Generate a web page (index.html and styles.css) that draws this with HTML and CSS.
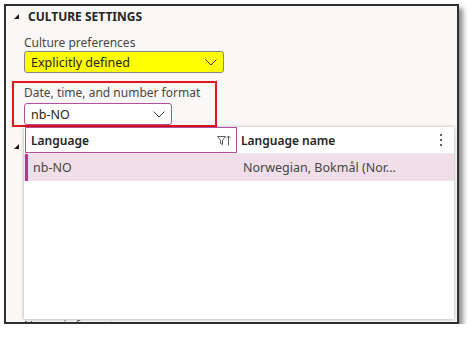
FILE: index.html
```html
<!DOCTYPE html>
<html lang="en">
<head>
  <meta charset="UTF-8" />
  <title>Culture settings</title>
  <link rel="stylesheet" href="styles.css">
</head>
<body>
  <div class="frame">
    <div class="section-head">
      <svg class="caret" width="5" height="5" viewBox="0 0 5 5"><polygon points="0,5 5,5 5,0" /></svg>
      <span>CULTURE SETTINGS</span>
    </div>

    <div class="field">
      <div class="label">Culture preferences</div>
      <div class="select select-yellow">
        <span>Explicitly defined</span>
        <svg class="chevron" width="12" height="7" viewBox="0 0 12 7"><polyline points="0.5,0.5 6,6 11.5,0.5" /></svg>
      </div>
    </div>

    <div class="highlight">
      <div class="label">Date, time, and number format</div>
      <div class="select select-focus">
        <span>nb-NO</span>
        <svg class="chevron" width="12" height="7" viewBox="0 0 12 7"><polyline points="0.5,0.5 6,6 11.5,0.5" /></svg>
      </div>
    </div>

    <div class="section-head second">
      <svg class="caret" width="5" height="5" viewBox="0 0 5 5"><polygon points="0,5 5,5 5,0" /></svg>
    </div>

    <div class="label bottom-label">Numeric format</div>

    <!-- lookup dropdown that sits over the panel -->
    <div class="lookup">
      <div class="lookup-head">
        <div class="col col-code active">
          <span>Language</span>
          <svg class="filter" width="14" height="11" viewBox="0 0 14 11">
            <path d="M0.5 1.5 H8.5 L5.5 5.2 V9.5 L3.5 8.5 V5.2 Z" />
            <path d="M11.5 10.5 V1 M9.5 3 L11.5 1 L13.5 3" />
          </svg>
        </div>
        <div class="col col-name">
          <span>Language name</span>
          <span class="kebab"><i></i><i></i><i></i></span>
        </div>
      </div>
      <div class="lookup-row selected">
        <div class="col col-code">nb-NO</div>
        <div class="col col-name">Norwegian, Bokmål (Nor...</div>
      </div>
    </div>
  </div>
</body>
</html>
```

FILE: styles.css
```css
body {
  margin: 0;
  background: #ffffff;
  font-family: "Noto Sans", "Open Sans", sans-serif;
  color: #323130;
}

.frame {
  position: relative;
  box-sizing: border-box;
  width: 455px;
  height: 320px;
  margin: 4px 0 0 4px;
  background: #f9f8f7;
  border: 2px solid #2f2f2f;
  box-shadow: 4px 4px 5px rgba(0, 0, 0, 0.45);
  overflow: hidden;
  padding: 1px 0 0 18px;
}

.section-head {
  display: flex;
  align-items: center;
  gap: 9px;
  margin-left: -10px;
  height: 18px;
  font-size: 12px;
  font-weight: bold;
  color: #252423;
}

.caret {
  fill: #1b1a19;
  margin-top: 1px;
}

.field {
  margin-top: 10px;
}

.label {
  font-size: 12px;
  line-height: 15px;
  color: #484644;
}

.select {
  box-sizing: border-box;
  display: flex;
  align-items: center;
  justify-content: space-between;
  height: 22px;
  padding: 0 6px 0 6px;
  margin-top: 1px;
  border-radius: 3px;
  font-size: 12.5px;
  color: #252423;
}

.select-yellow {
  width: 200px;
  background: #ffff00;
  border: 1px solid #8a8886;
}

.select-focus {
  width: 148px;
  background: #ffffff;
  border: 1px solid #b4509f;
}

.chevron {
  fill: none;
  stroke: #3b3a39;
  stroke-width: 1;
}

.highlight {
  box-sizing: border-box;
  width: 205px;
  height: 46px;
  margin: 8px 0 0 -12px;
  padding: 2px 0 0 10px;
  border: 2px solid #e8141c;
}

.highlight .select {
  margin-top: 3px;
}

.second {
  margin-top: 10px;
}

.bottom-label {
  margin-top: 163px;
  color: #605e5c;
}

.lookup {
  position: absolute;
  left: 18px;
  top: 121px;
  width: 430px;
  height: 192px;
  background: #ffffff;
  box-shadow: 0 0 3px rgba(0, 0, 0, 0.22), 0 1px 4px rgba(0, 0, 0, 0.12);
  font-size: 12.5px;
}

.lookup-head {
  display: flex;
  height: 26px;
  border-bottom: 1px solid #edebe9;
  font-weight: 600;
  font-size: 12px;
  color: #252423;
}

.lookup-row {
  display: flex;
  height: 27px;
  color: #484644;
}

.col {
  display: flex;
  align-items: center;
  box-sizing: border-box;
}

.col-code {
  width: 213px;
  padding-left: 6px;
}

.col-name {
  flex: 1;
  padding-left: 4px;
  justify-content: space-between;
  padding-right: 12px;
}

.lookup-head .col-code {
  justify-content: space-between;
  padding-right: 5px;
  border: 1px solid #b4509f;
  margin-left: 1px;
  width: 212px;
  padding-left: 5px;
}

.filter {
  fill: none;
  stroke: #605e5c;
  stroke-width: 1;
}

.kebab {
  display: flex;
  flex-direction: column;
  gap: 3px;
}

.kebab i {
  display: block;
  width: 2px;
  height: 2px;
  background: #605e5c;
}

.selected {
  background: #f0dfe9;
}

.selected .col-code {
  border-left: 3px solid #b3388f;
  padding-left: 5px;
  width: 214px;
  margin-left: 1px;
}
```
